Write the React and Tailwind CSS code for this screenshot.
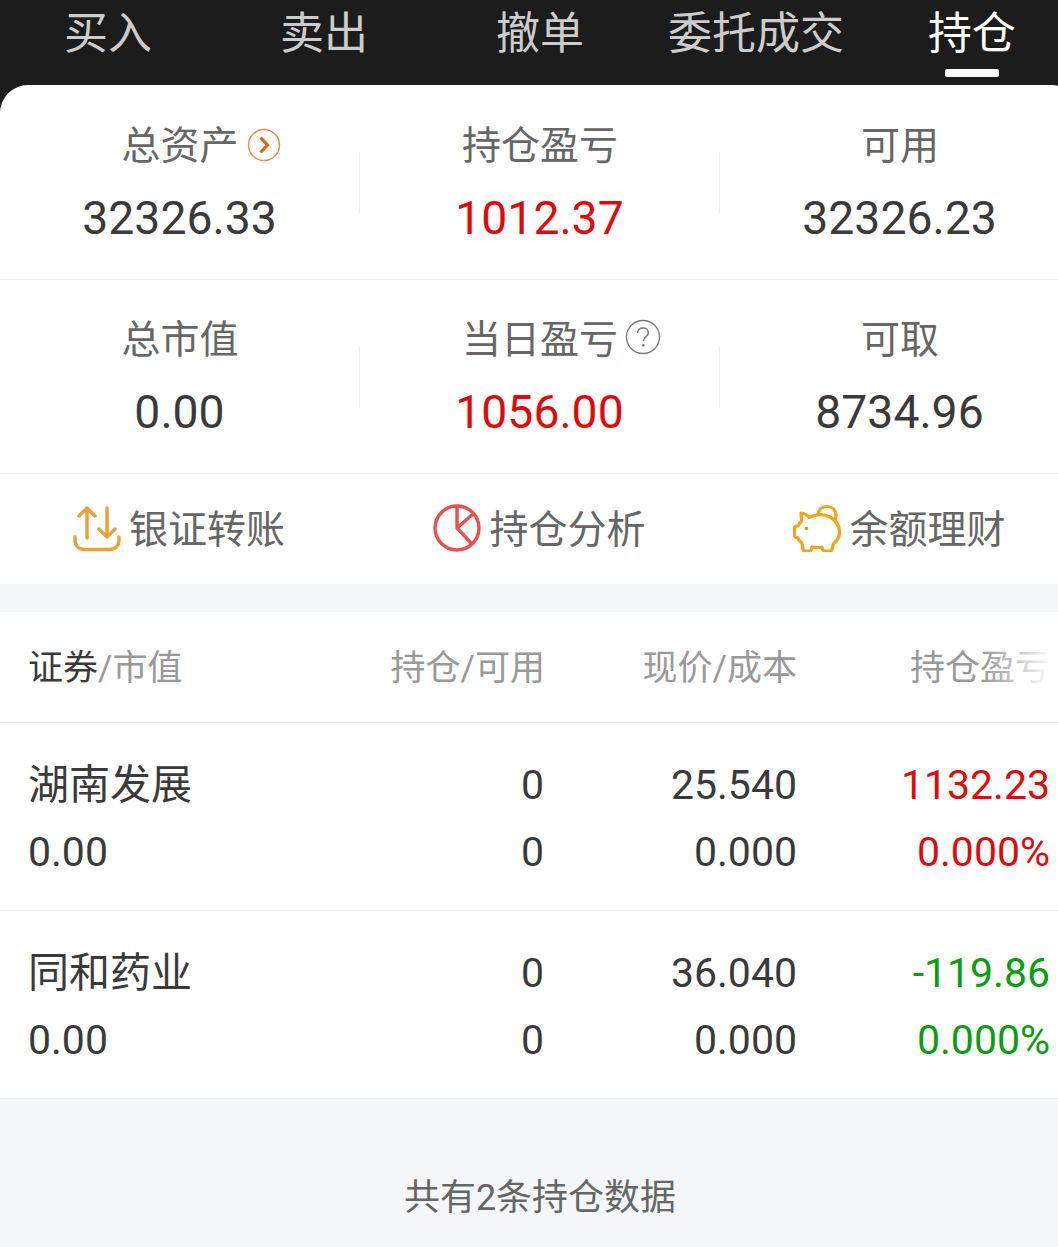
import React from 'react';

const font = { fontFamily: 'Roboto, "Noto Sans CJK SC", sans-serif' };

const tabs = ['买入', '卖出', '撤单', '委托成交', '持仓'];

function ArrowCircle() {
  return (
    <svg width="34" height="34" viewBox="0 0 34 34" fill="none" className="absolute left-full top-[10px] ml-[8px]">
      <circle cx="17" cy="17" r="15.5" stroke="#e58a4e" strokeWidth="1.4" />
      <path d="M13.5 9.5 L20.5 17 L13.5 24.5" stroke="#dd6314" strokeWidth="3.2" />
    </svg>
  );
}

function HelpCircle() {
  return (
    <svg width="36" height="36" viewBox="0 0 36 36" fill="none" className="absolute left-full top-[7px] ml-[7px]">
      <circle cx="18" cy="18" r="16.5" stroke="#777" strokeWidth="1.3" />
      <path d="M12.6 14 C12.8 10.8 15 9 18 9 C21 9 23.4 10.9 23.4 13.7 C23.4 17.2 18.4 17.6 18.4 22" stroke="#777" strokeWidth="1.5" />
      <circle cx="18.4" cy="26.2" r="1.2" fill="#777" />
    </svg>
  );
}

function TransferIcon() {
  return (
    <svg width="48" height="48" viewBox="0 0 48 48" fill="none" stroke="#e9a23b" strokeWidth="3.4" strokeLinecap="round" strokeLinejoin="round" className="mb-[6px]">
      <path d="M14 34 V4 M6 12 L14 4 L22 12" />
      <path d="M34 4 V33 M26 25 L34 33 L42 25" />
      <path d="M2 33 V36 C2 42 6 45.5 12 45.5 H36 C42 45.5 46 42 46 36 V33" />
    </svg>
  );
}

function PieIcon() {
  return (
    <svg width="48" height="48" viewBox="0 0 48 48" fill="none" stroke="#e9504f" strokeWidth="3.4" strokeLinejoin="round" className="mb-[6px]">
      <circle cx="24" cy="24" r="22" />
      <path d="M24 2 V24 L39 40 M24 24 L40 10" />
    </svg>
  );
}

function PigIcon() {
  return (
    <svg width="48" height="48" viewBox="0 0 48 48" fill="none" stroke="#efa61f" strokeWidth="3.2" strokeLinejoin="round" strokeLinecap="round" className="mb-[6px]">
      <path d="M25 10 C26 5 30 2.5 34 2.5 C39 2.5 43 6 43 11 C43 13 42.5 14.5 42 16" />
      <path d="M8 9 C11 9 14 11 16.5 13.5 C22 10 31 9.5 37 13 C43 16.5 46.5 22 46.5 28 C46.5 33 44 37 40.5 39.5 L39 45 C38.8 46.5 38 47 36.5 47 H32 C30.5 47 30 46.5 29.5 45 L29 43 C25.5 43.7 22 43.7 19 43 L18.5 45 C18 46.5 17.5 47 16 47 H12.5 C11 47 10.2 46.5 10 45 L9 39 C7 37.5 5.5 35.5 4.5 33.5 H3.5 C2 33.5 1.6 32.8 1.6 31 V24 C1.6 22.5 2.2 22 3.5 22 H5 C5.8 20 7 18.5 8.5 17 Z" />
      <circle cx="13.5" cy="24.5" r="1.7" fill="#e58a1e" stroke="none" />
    </svg>
  );
}

function StatRow({ items, height, labelTop }) {
  return (
    <div className={`grid grid-cols-[360px_360px_360px] border-b border-[#eeeeee] ${height}`}>
      {items.map((item, i) => (
        <div key={item.label} className="relative flex h-full flex-col items-center">
          {i > 0 && <div className="absolute left-[-1px] top-[67px] h-[61px] w-px bg-[#eeeeee]" />}
          <div className={`relative h-[56px] text-[39px] leading-[56px] text-[#666] ${labelTop}`}>
            {item.label}
            {item.icon}
          </div>
          <div className={`mt-[16px] pr-[1px] text-[46.3px] leading-[56px] ${item.color || 'text-[#3a3a3a]'}`}>{item.value}</div>
        </div>
      ))}
    </div>
  );
}

const positions = [
  { name: '湖南发展', value: '0.00', qty: '0', free: '0', price: '25.540', cost: '0.000', pl: '1132.23', pct: '0.000%', color: 'text-[#dd0c0c]' },
  { name: '同和药业', value: '0.00', qty: '0', free: '0', price: '36.040', cost: '0.000', pl: '-119.86', pct: '0.000%', color: 'text-[#0b9c12]' },
];

export default function App() {
  return (
    <div className="h-[1247px] w-[1058px] overflow-hidden bg-[#f5f6f8]" style={font}>
      <div className="w-[1080px] bg-[#1c1c1c]">
        <div className="flex h-[85px]">
          {tabs.map((tab, i) => (
            <div key={tab} className="relative w-[216px] pt-[4px] text-center text-[44px] leading-[60px]">
              <span className={i === 4 ? 'text-white' : 'text-[#cccccc]'}>{tab}</span>
              {i === 4 && <div className="absolute left-[81px] top-[69px] h-[8px] w-[54px] rounded-[2px] bg-white" />}
            </div>
          ))}
        </div>

        <div className="rounded-t-[28px] bg-white">
          <StatRow
            height="h-[195px]"
            labelTop="mt-[33px]"
            items={[
              { label: '总资产', value: '32326.33', icon: <ArrowCircle /> },
              { label: '持仓盈亏', value: '1012.37', color: 'text-[#dd0c0c]' },
              { label: '可用', value: '32326.23' },
            ]}
          />
          <StatRow
            height="h-[194px]"
            labelTop="mt-[32px]"
            items={[
              { label: '总市值', value: '0.00' },
              { label: '当日盈亏', value: '1056.00', color: 'text-[#dd0c0c]', icon: <HelpCircle /> },
              { label: '可取', value: '8734.96' },
            ]}
          />
          <div className="grid h-[110px] grid-cols-[360px_360px_360px] items-center pt-[3px] text-[39px] text-[#666]">
            <div className="flex items-center justify-center gap-[8px] pr-[2px]"><TransferIcon />银证转账</div>
            <div className="flex items-center justify-center gap-[8px] pr-[1px]"><PieIcon />持仓分析</div>
            <div className="flex items-center justify-center gap-[8px] pr-[1px]"><PigIcon />余额理财</div>
          </div>
        </div>
      </div>

      <div className="mt-[28px] bg-white">
        <div className="relative grid h-[111px] grid-cols-[265px_252px_252px_253px] items-center border-b border-[#eeeeee] pl-[28px] pt-[5px] text-[35px] text-[#999]">
          <div><span className="text-[#3a3a3a]">证券</span>/市值</div>
          <div className="text-right">持仓/可用</div>
          <div className="text-right">现价/成本</div>
          <div className="text-right">持仓盈亏</div>
          <div className="absolute right-0 top-0 h-full w-[75px] bg-gradient-to-r from-white/0 to-white to-95%" />
        </div>

        {positions.map((p) => (
          <div key={p.name} className="grid h-[188px] grid-cols-[265px_251px_253px_253px] content-start border-b border-[#eeeeee] pl-[28px] pt-[29px] text-[41px] leading-[67px] text-[#3a3a3a]">
            <div>{p.name}</div>
            <div className="text-right">{p.qty}</div>
            <div className="text-right">{p.price}</div>
            <div className={`text-right ${p.color}`}>{p.pl}</div>
            <div>{p.value}</div>
            <div className="text-right">{p.free}</div>
            <div className="text-right">{p.cost}</div>
            <div className={`text-right ${p.color}`}>{p.pct}</div>
          </div>
        ))}
      </div>

      <div className="mt-[72px] w-[1080px] text-center text-[36px] leading-[54px] text-[#666]">共有2条持仓数据</div>
    </div>
  );
}
